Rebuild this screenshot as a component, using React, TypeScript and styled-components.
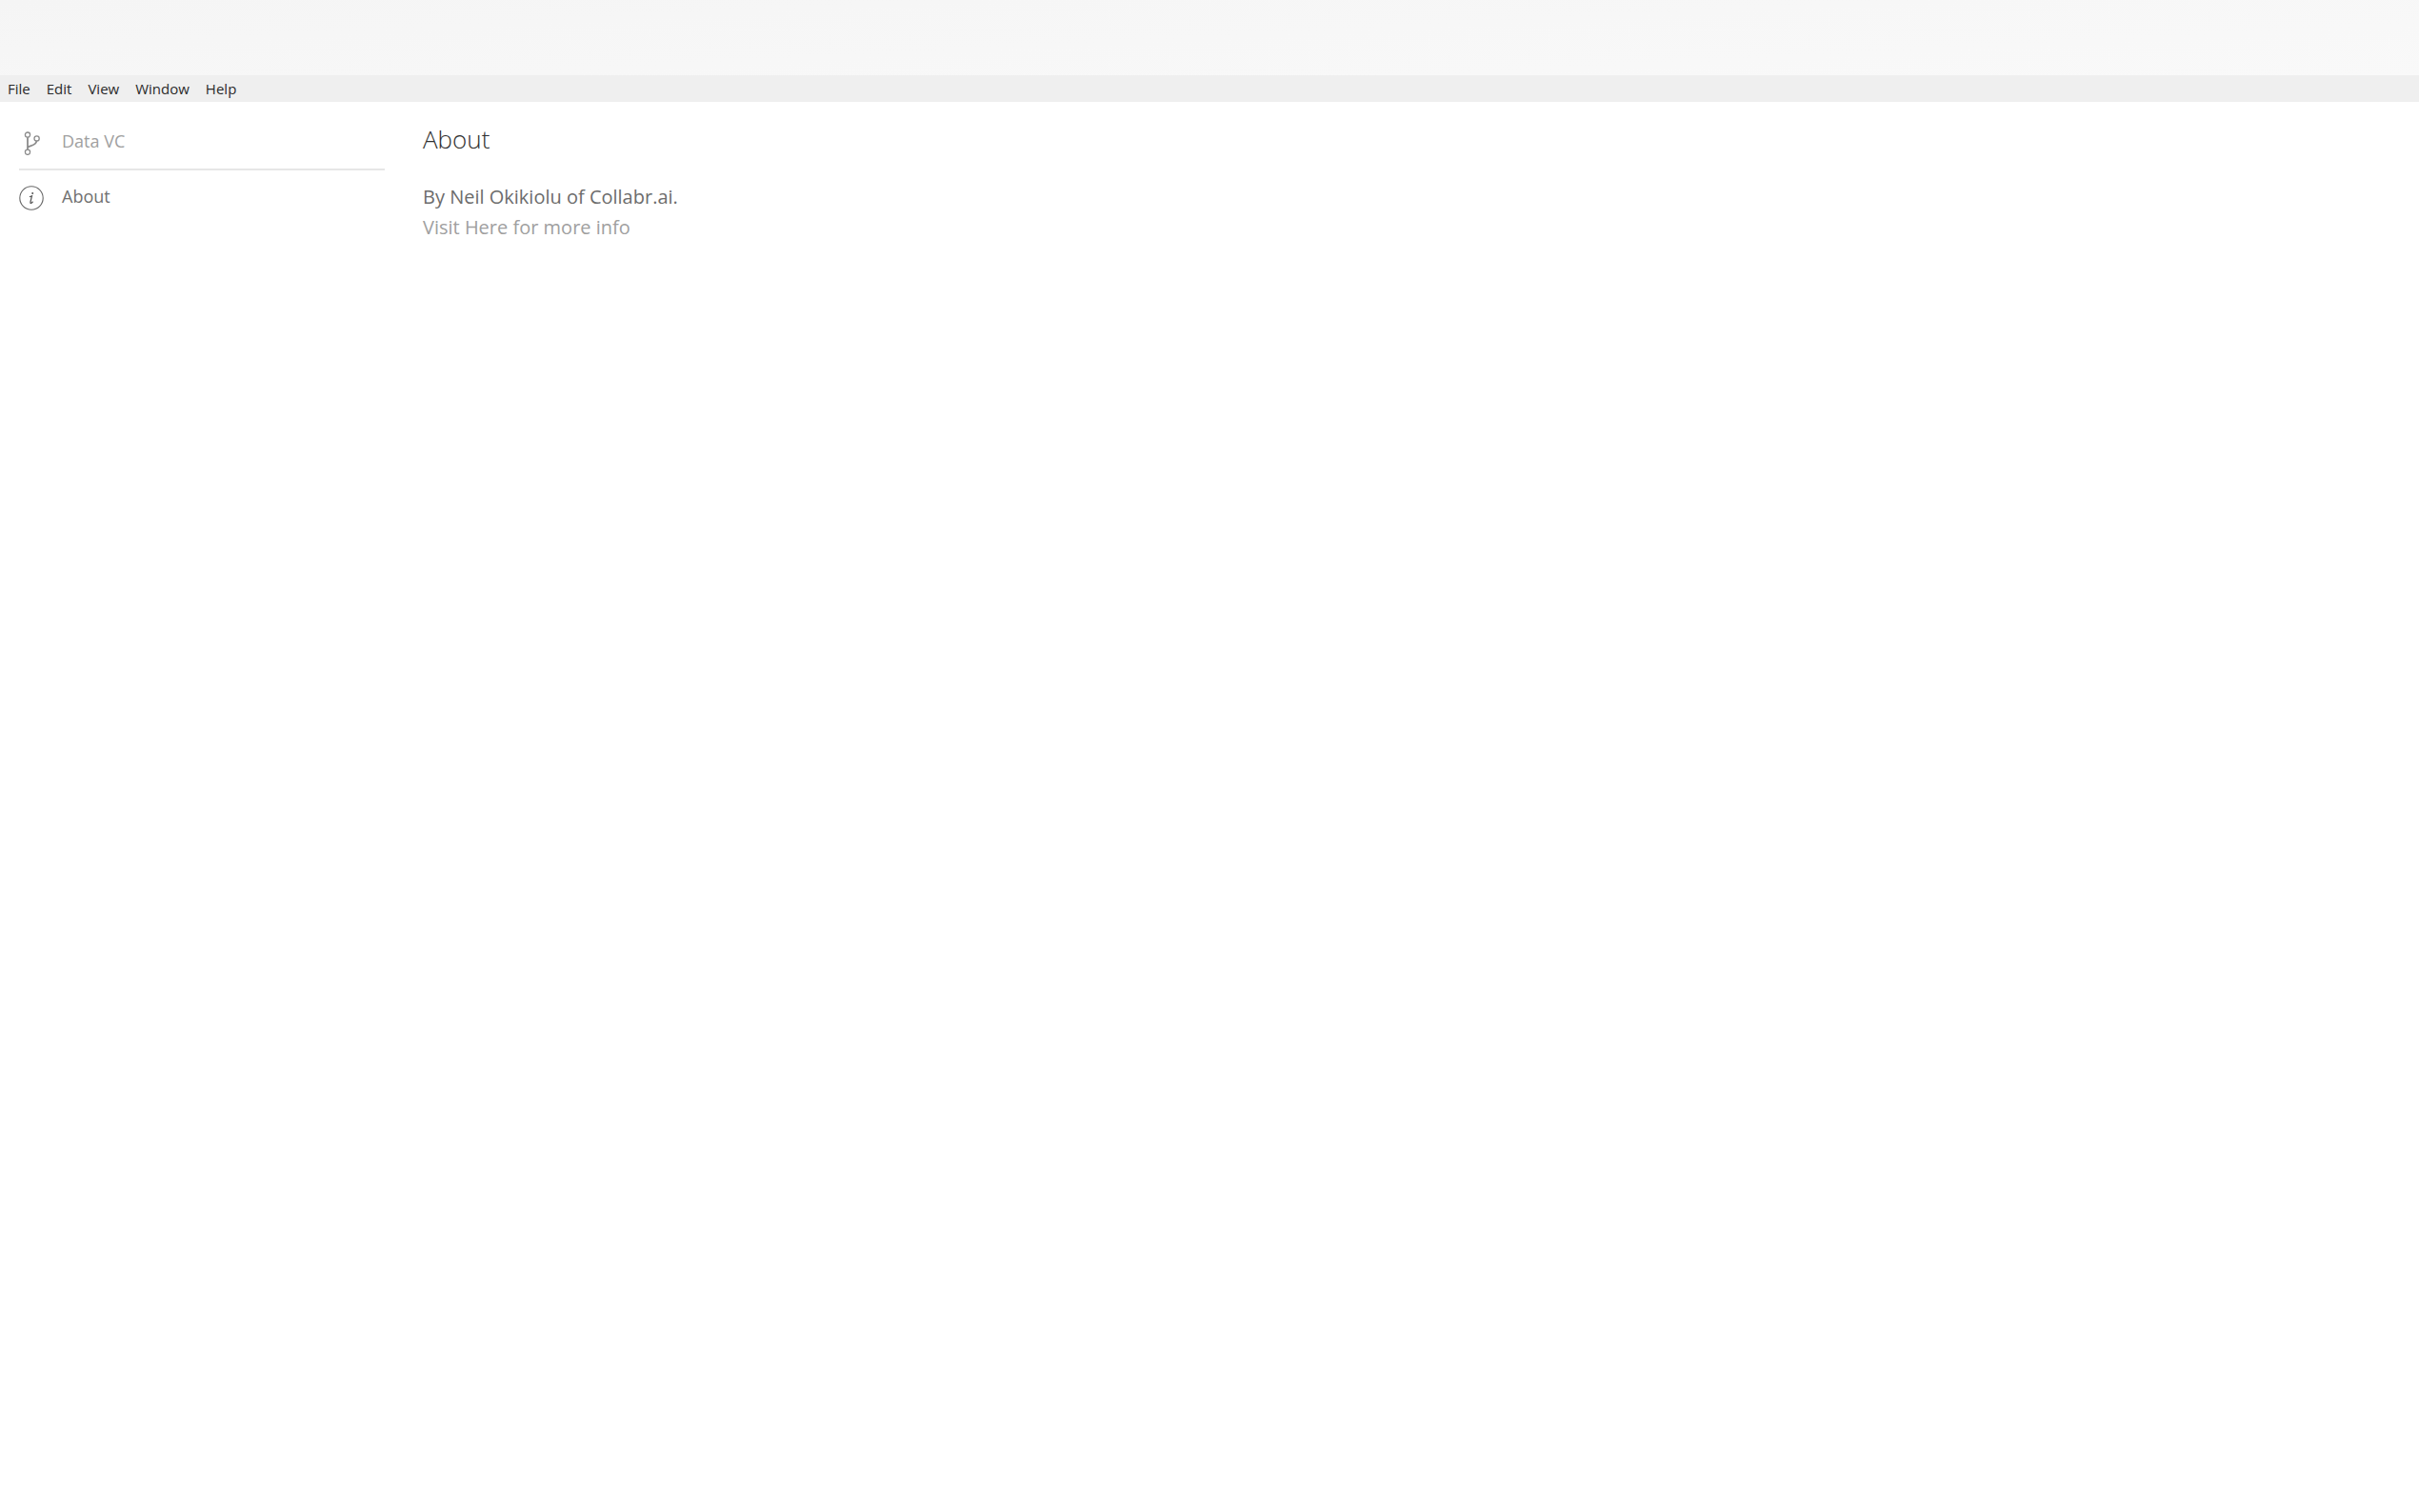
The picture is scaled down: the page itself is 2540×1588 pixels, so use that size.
import React from "react";
import styled, { createGlobalStyle } from "styled-components";

const GlobalStyle = createGlobalStyle`
  *, *::before, *::after { box-sizing: border-box; }
  body {
    margin: 0;
    background: #ffffff;
    font-family: "Segoe UI", "Open Sans", "Noto Sans", sans-serif;
  }
`;

const TitleBar = styled.header`
  height: 79px;
  background: linear-gradient(177deg, #f5f5f5, #f9f9f9);
`;

const MenuBar = styled.nav`
  display: flex;
  gap: 1px;
  height: 28px;
  background: #efefef;
`;

const MenuButton = styled.button`
  padding: 0 8px;
  border: 0;
  background: none;
  color: #2b2b2b;
  font: 400 15px/28px "Segoe UI", "Open Sans", "Noto Sans", sans-serif;
`;

const Workspace = styled.div`
  display: flex;
  align-items: flex-start;
`;

const Sidebar = styled.nav`
  flex: none;
  width: 424px;
  padding: 12px 20px;
`;

const NavItem = styled.a<{ $muted?: boolean }>`
  display: flex;
  align-items: center;
  gap: 19px;
  height: 58px;
  color: ${(p) => (p.$muted ? "#a0a0a0" : "#707070")};
  font-size: 18px;
  line-height: 24px;
  text-decoration: none;

  & + & {
    border-top: 2px solid #e6e6e6;
    height: 56px;
  }

  svg {
    flex: none;
    margin-top: 4px;
    color: #8c8c8c;
  }
`;

const Content = styled.main`
  flex: 1;
  padding: 20px;
`;

const Heading = styled.h1`
  margin: 0 0 26px;
  color: #303030;
  font-size: 26px;
  font-weight: 300;
  line-height: 38px;
`;

const Line = styled.p`
  margin: 0;
  color: #6c6c6c;
  font-size: 20px;
  line-height: 32px;
`;

const InfoLink = styled.a`
  color: #a0a0a0;
  text-decoration: none;
`;

const BranchIcon = () => (
  <svg width="26" height="26" viewBox="0 0 26 26" fill="none" stroke="currentColor" aria-hidden="true">
    <g strokeWidth="1.3">
      <circle cx="9" cy="4.6" r="2.6" />
      <circle cx="18.6" cy="8.4" r="2.6" />
      <circle cx="9" cy="22.8" r="2.6" />
    </g>
    <path d="M9 7.2V20.2M9 18C10.5 15.4 17.8 16.6 18.4 11" strokeWidth="1.8" />
  </svg>
);

const InfoIcon = () => (
  <svg width="26" height="26" viewBox="0 0 26 26" fill="none" stroke="#686868" aria-hidden="true">
    <circle cx="13" cy="13" r="12.2" strokeWidth="1.1" />
    <circle cx="14.2" cy="8" r="1" fill="#555" stroke="none" />
    <path d="M10.9 11.7Q12.4 11.2 13.5 10.7L12 17Q11.6 19 13 18.2L14.6 16.8" stroke="#555" strokeWidth="1.2" />
  </svg>
);

const MENUS = ["File", "Edit", "View", "Window", "Help"];

export default function App() {
  return (
    <>
      <GlobalStyle />
      <TitleBar />
      <MenuBar aria-label="Application">
        {MENUS.map((name) => (
          <MenuButton key={name} type="button">{name}</MenuButton>
        ))}
      </MenuBar>
      <Workspace>
        <Sidebar aria-label="Sections">
          <NavItem href="#data" $muted>
            <BranchIcon />
            Data VC
          </NavItem>
          <NavItem href="#about">
            <InfoIcon />
            About
          </NavItem>
        </Sidebar>
        <Content>
          <Heading>About</Heading>
          <Line>By Neil Okikiolu of Collabr.ai.</Line>
          <Line>
            <InfoLink href="#info">Visit Here for more info</InfoLink>
          </Line>
        </Content>
      </Workspace>
    </>
  );
}
